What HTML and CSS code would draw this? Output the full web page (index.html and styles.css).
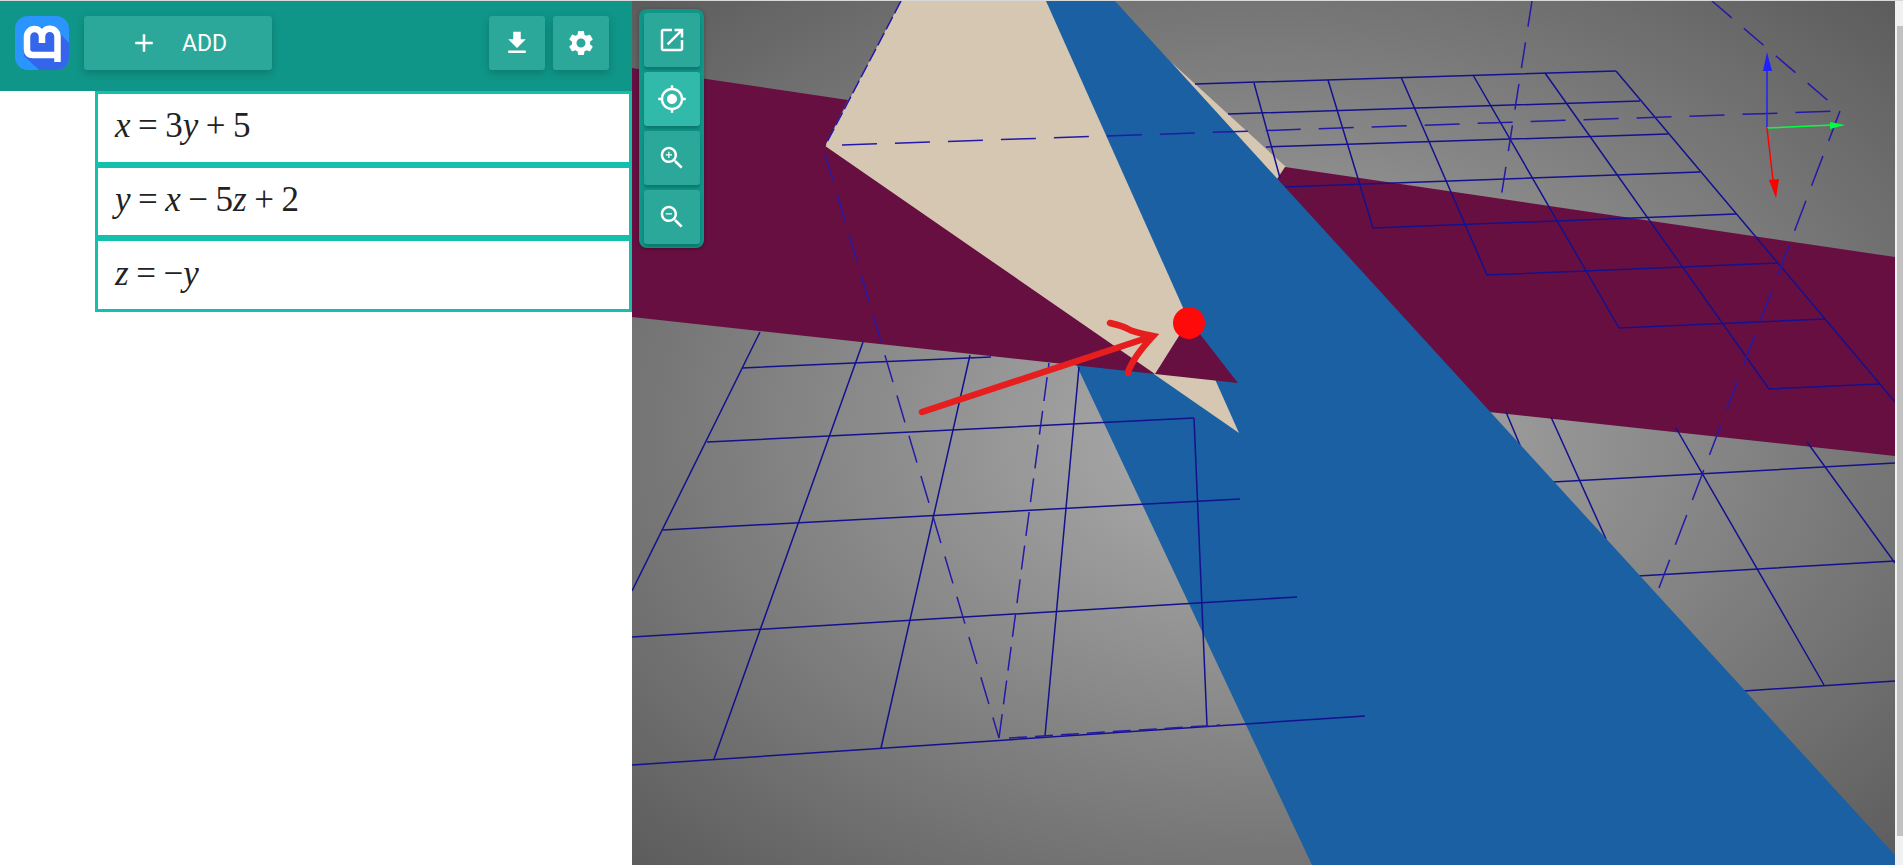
FILE: index.html
```html
<!DOCTYPE html>
<html lang="en">
<head>
    <meta charset="UTF-8">
    <title>Math3d</title>
    <link rel="stylesheet" href="styles.css">
</head>
<body>

<div class="topline"></div>
<div class="app">

    <div class="panel">
        <div class="header">
            <svg class="logo" viewBox="0 0 54 54">
                <clipPath id="logoClip"><rect width="54" height="54" rx="13"/></clipPath>
                <rect width="54" height="54" rx="13" fill="#2b95ff"/>
                <polygon clip-path="url(#logoClip)" points="12,13 38,10 54,27 54,54 24,54 9,40" fill="#3565ea"/>
                <path d="M42.5 46V20.5a7.75 7.75 0 0 0-15.5 0V27M27 20.5a7.5 7.5 0 0 0-15 0V33q0 6 6 6H42" fill="none" stroke="#fff" stroke-width="6.5"/>
            </svg>
            <button class="btn btn-add">
                <svg class="icon" viewBox="0 0 24 24"><path d="M19 13h-6v6h-2v-6H5v-2h6V5h2v6h6v2z"/></svg>
                <span>ADD</span>
            </button>
            <div class="spacer"></div>
            <button class="btn btn-icon">
                <svg class="icon" viewBox="0 0 24 24"><path d="M19 9h-4V3H9v6H5l7 7 7-7zM5 18v2h14v-2H5z"/></svg>
            </button>
            <button class="btn btn-icon">
                <svg class="icon" viewBox="0 0 24 24"><path d="M19.14 12.94c.04-.3.06-.61.06-.94 0-.32-.02-.64-.07-.94l2.03-1.58c.18-.14.23-.41.12-.61l-1.92-3.32c-.12-.22-.37-.29-.59-.22l-2.39.96c-.5-.38-1.03-.7-1.62-.94l-.36-2.54c-.04-.24-.24-.41-.48-.41h-3.84c-.24 0-.43.17-.47.41l-.36 2.54c-.59.24-1.13.57-1.62.94l-2.39-.96c-.22-.08-.47 0-.59.22L2.74 8.87c-.12.21-.08.47.12.61l2.03 1.58c-.05.3-.09.63-.09.94s.02.64.07.94l-2.03 1.58c-.18.14-.23.41-.12.61l1.92 3.32c.12.22.37.29.59.22l2.39-.96c.5.38 1.03.7 1.62.94l.36 2.54c.05.24.24.41.48.41h3.84c.24 0 .44-.17.47-.41l.36-2.54c.59-.24 1.13-.56 1.62-.94l2.39.96c.22.08.47 0 .59-.22l1.92-3.32c.12-.22.07-.47-.12-.61l-2.01-1.58zM12 15.6c-1.98 0-3.6-1.62-3.6-3.6s1.62-3.6 3.6-3.6 3.6 1.62 3.6 3.6-1.62 3.6-3.6 3.6z"/></svg>
            </button>
        </div>
        <div class="equations">
            <div class="equation"><i>x</i><b>=</b><span>3</span><i>y</i><b>+</b><span>5</span></div>
            <div class="equation"><i>y</i><b>=</b><i>x</i><b>−</b><span>5</span><i>z</i><b>+</b><span>2</span></div>
            <div class="equation"><i>z</i><b>=</b><span>−</span><i>y</i></div>
        </div>
    </div>

    <div class="scene">
        <svg class="plot" viewBox="632 1 1263 864">
            <!-- grid and cream sliver behind the blue plane -->
            <polygon class="cream" points="1171,62 1286,167 1278,180"/>
            <polygon class="purple" points="1285,167 1895,257 1895,456 1489,412 1250,220"/>
            <g class="grid">
                <path d="M1195 84L1616 71M1228 114L1640 101M1266 147L1668 134M1283 187L1700 172M1373 228L1736 214M1487 275L1778 263M1619 328L1825 319M1769 389L1879 384"/>
                <path d="M1616 71L1895 402M1545 73L1769 389M1473 75L1619 328M1401 77L1487 275M1328 80L1373 228M1254 83L1280 178"/>
                <path d="M1506 412L1522 450M1551 417L1606 539M1676 428L1824 685M1807 442L1895 563"/>
                <path d="M1553 482L1895 463M1638 576L1895 561M1744 691L1895 681"/>
            </g>
            <polygon class="blue" points="1046,1 1115,1 1895,855 1895,865 1312,865 1060,330"/>
            <!-- grid in front of the blue plane -->
            <g class="grid">
                <path d="M742 368L991 357M707 442L1194 418M663 530L1240 499M632 637L1297 597M632 765L1365 716"/>
                <path d="M760 332L632 591M863 342L714 759M970 355L881 748M1079 367L1045 736M1194 418L1207 725"/>
            </g>
            <polygon class="cream" points="901,1 1046,1 1239,433 825,146"/>
            <polygon class="purple" points="632,68 848,100 825,146 1155,374 632,317"/>
            <polygon class="purple" points="1155,374 1238,383 1189,320"/>
            <!-- bounding box -->
            <g class="dash">
                <path d="M901 1L825 146" stroke-dasharray="14 4"/>
                <path d="M842 145L1840 111" stroke-dasharray="35 18"/>
                <path d="M825 154L999 738" stroke-dasharray="28 14"/>
                <path d="M999 738L1049 363" stroke-dasharray="24 10"/>
                <path d="M1532 1L1501 198" stroke-dasharray="26 16"/>
                <path d="M1712 1L1832 104" stroke-dasharray="26 16"/>
                <path d="M1840 111L1659 588" stroke-dasharray="32 16"/>
                <path d="M1009 738L1220 725" stroke-dasharray="18 8" stroke-width="2"/>
            </g>
            <!-- axes -->
            <path d="M1767 128V70" stroke="#2020ff" stroke-width="1.5"/>
            <polygon points="1763,71 1772,71 1767,52" fill="#2020ff"/>
            <path d="M1767 128L1832 125" stroke="#00ff40" stroke-width="1.5"/>
            <polygon points="1830,122 1830,129 1845,125" fill="#00ff40"/>
            <path d="M1767 128L1773 180" stroke="#ff0000" stroke-width="1.5"/>
            <polygon points="1769,180 1779,179 1776,198" fill="#ff0000"/>
            <!-- hand drawn arrow -->
            <path d="M922 412L1153 336M1110 323Q1123 326 1128 329T1153 336Q1140 350 1134 360T1128 373" fill="none" stroke="#e61e1e" stroke-width="6.5" stroke-linecap="round"/>
            <circle cx="1189" cy="323" r="16" fill="#ff0a0a"/>
        </svg>

        <div class="toolbar">
            <button class="tool">
                <svg class="icon" viewBox="0 0 24 24"><path d="M19 19H5V5h7V3H5c-1.11 0-2 .9-2 2v14c0 1.1.89 2 2 2h14c1.1 0 2-.9 2-2v-7h-2v7zM14 3v2h3.59l-9.83 9.83 1.41 1.41L19 6.41V10h2V3h-7z"/></svg>
            </button>
            <button class="tool tool-hover">
                <svg class="icon" viewBox="0 0 24 24"><path d="M12 8c-2.21 0-4 1.79-4 4s1.79 4 4 4 4-1.79 4-4-1.79-4-4-4zm8.94 3c-.46-4.17-3.77-7.48-7.94-7.94V1h-2v2.06C6.83 3.52 3.52 6.83 3.06 11H1v2h2.06c.46 4.17 3.77 7.48 7.94 7.94V23h2v-2.06c4.17-.46 7.48-3.77 7.94-7.94H23v-2h-2.06zM12 19c-3.87 0-7-3.13-7-7s3.13-7 7-7 7 3.13 7 7-3.13 7-7 7z"/></svg>
            </button>
            <button class="tool">
                <svg class="icon" viewBox="0 0 24 24"><path d="M15.5 14h-.79l-.28-.27C15.41 12.59 16 11.11 16 9.5 16 5.91 13.09 3 9.5 3S3 5.91 3 9.5 5.91 16 9.5 16c1.61 0 3.09-.59 4.23-1.57l.27.28v.79l5 4.99L20.49 19l-4.99-5zm-6 0C7.01 14 5 11.99 5 9.5S7.01 5 9.5 5 14 7.01 14 9.5 11.99 14 9.5 14z"/><path d="M12 10h-2v2H9v-2H7V9h2V7h1v2h2v1z"/></svg>
            </button>
            <button class="tool">
                <svg class="icon" viewBox="0 0 24 24"><path d="M15.5 14h-.79l-.28-.27C15.41 12.59 16 11.11 16 9.5 16 5.91 13.09 3 9.5 3S3 5.91 3 9.5 5.91 16 9.5 16c1.61 0 3.09-.59 4.23-1.57l.27.28v.79l5 4.99L20.49 19l-4.99-5zm-6 0C7.01 14 5 11.99 5 9.5S7.01 5 9.5 5 14 7.01 14 9.5 11.99 14 9.5 14z"/><path d="M7 9h5v1H7z"/></svg>
            </button>
        </div>
    </div>

    <div class="scrollbar"><div class="thumb"></div></div>
</div>

</body>
</html>
```

FILE: styles.css
```css
body {
    margin: 0;
    height: 865px;
    overflow: hidden;
    background-color: #fff;
    font-family: Roboto, sans-serif;
}

.topline {
    height: 1px;
    background-color: #d9d9d9;
}

.app {
    display: flex;
    height: 864px;
}

/* left panel */
.panel {
    width: 632px;
    flex-shrink: 0;
}

.header {
    height: 90px;
    box-sizing: border-box;
    padding: 15px 23px 0 15px;
    display: flex;
    align-items: flex-start;
    gap: 8px;
    background-color: #0f9688;
}

.logo {
    width: 54px;
    height: 54px;
    margin-right: 7px;
}

.spacer {
    flex: 1;
}

.btn {
    height: 54px;
    display: flex;
    align-items: center;
    justify-content: center;
    border: none;
    padding: 0;
    border-radius: 3px;
    background-color: #2ca89a;
    box-shadow: 0 3px 8px rgba(0, 0, 0, 0.2);
    color: #fff;
    font-family: Roboto, sans-serif;
}

.btn-add {
    width: 188px;
    box-sizing: border-box;
    justify-content: flex-start;
    padding-left: 45px;
    gap: 23px;
    font-size: 23px;
}

.btn-icon {
    width: 56px;
}

.icon {
    width: 30px;
    height: 30px;
    fill: #fff;
}

/* equation list */
.equations {
    margin-left: 95px;
}

.equation {
    height: 73.7px;
    box-sizing: border-box;
    border: 3px solid #14bfad;
    padding: 0 0 3px 17px;
    display: flex;
    align-items: center;
    font-family: "Liberation Serif", serif;
    font-size: 35px;
    color: #222;
}

.equation i {
    font-style: italic;
}

.equation b {
    font-weight: normal;
    margin: 0 7.5px;
}

/* 3d view */
.scene {
    position: relative;
    flex: 1;
    background: radial-gradient(ellipse farthest-corner at 50% 50%, #b0b0b0, #5c5c5c);
    overflow: hidden;
}

.plot {
    display: block;
    width: 100%;
    height: 100%;
}

.cream {
    fill: #d6c7b3;
}

.purple {
    fill: #680f41;
}

.blue {
    fill: #1a60a3;
}

.grid path {
    fill: none;
    stroke: #14118f;
    stroke-width: 1.5;
}

.dash path {
    fill: none;
    stroke: #2519a8;
    stroke-width: 1.5;
}

.toolbar {
    position: absolute;
    top: 8px;
    left: 7px;
    width: 65px;
    box-sizing: border-box;
    padding: 4px 4px 4px 5px;
    display: flex;
    flex-direction: column;
    gap: 5px;
    border-radius: 8px;
    background-color: #0f9688;
    box-shadow: 0 1px 4px rgba(0, 0, 0, 0.3);
}

.tool {
    width: 56px;
    height: 54px;
    border: none;
    padding: 0;
    display: flex;
    align-items: center;
    justify-content: center;
    border-radius: 3px;
    background-color: #2ca89a;
    box-shadow: 0 3px 3px rgba(0, 0, 0, 0.2);
}

.tool-hover {
    background-color: #31b9a9;
}

/* browser scrollbar */
.scrollbar {
    width: 8px;
    box-sizing: border-box;
    padding: 25px 0 29px 2px;
    background-color: #f1f1f1;
}

.thumb {
    height: 100%;
    background-color: #c1c1c1;
}
```
